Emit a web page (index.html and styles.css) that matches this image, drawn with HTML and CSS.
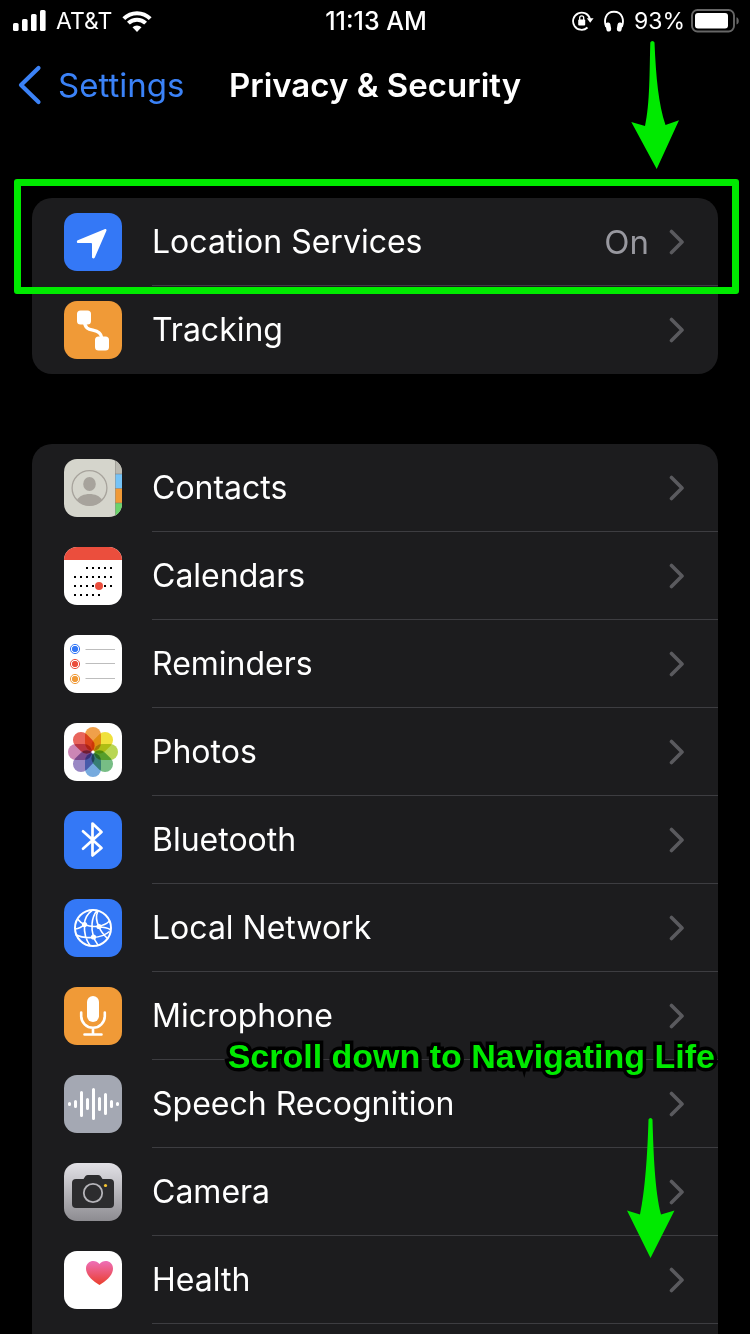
FILE: index.html
```html
<!DOCTYPE html>
<html lang="en">
<head>
<meta charset="utf-8">
<meta name="viewport" content="width=device-width, initial-scale=1">
<title>Privacy &amp; Security</title>
<link rel="stylesheet" href="styles.css">
</head>
<body>
<svg class="defs" width="0" height="0" aria-hidden="true">
  <defs>
    <symbol id="chevron" viewBox="0 0 16 26"><path d="M2.500 2.500 13 13 2.500 23.500" fill="none" stroke="currentColor" stroke-width="3.600" stroke-linecap="round" stroke-linejoin="round"/></symbol>
    <linearGradient id="camera-bg" x1="0" y1="0" x2="0" y2="1"><stop offset="0" stop-color="#e2e1e6"/><stop offset="1" stop-color="#8d8c91"/></linearGradient>
    <linearGradient id="heart-fill" x1="0" y1="0" x2="0" y2="1"><stop offset="0" stop-color="#ee6fb8"/><stop offset="1" stop-color="#ea3e2c"/></linearGradient>
    <clipPath id="tile"><rect width="58" height="58" rx="13"/></clipPath>
  </defs>
</svg>
<div class="screen">
  <header class="top">
    <div class="status">
      <div class="status-group">
        <svg width="33" height="22" viewBox="0 0 33 22" fill="#fff" role="img" aria-label="Signal"><rect x="0" y="13" width="5.600" height="8" rx="1.600"/><rect x="9" y="9" width="5.600" height="12" rx="1.600"/><rect x="18" y="4" width="5.600" height="17" rx="1.600"/><rect x="27" y="0" width="5.600" height="21" rx="1.600"/></svg>
        <span class="carrier">AT&amp;T</span>
        <svg width="30" height="22" viewBox="0 0 30 22" role="img" aria-label="Wi-Fi"><path d="M1.800 8.600a18.700 18.700 0 0 1 26.400 0M6.400 13.200a12.200 12.200 0 0 1 17.200 0" fill="none" stroke="#fff" stroke-width="4"/><path d="M15 22 10.500 17.200a6.500 6.500 0 0 1 9 0z" fill="#fff"/></svg>
      </div>
      <time class="clock">11:13 AM</time>
      <div class="status-group status-right">
        <svg width="22" height="22" viewBox="0 0 22 22" role="img" aria-label="Rotation lock"><path d="M15.500 17.500A8.600 8.600 0 1 1 18 9" fill="none" stroke="#fff" stroke-width="1.800"/><path d="M14.800 8.200h6.800l-3.400 4.600z" fill="#fff"/><rect x="6.200" y="9.500" width="7" height="6" rx="1" fill="#fff"/><path d="M7.700 10V7.800a2 2 0 0 1 4 0V10" fill="none" stroke="#fff" stroke-width="1.300"/></svg>
        <svg width="20" height="22" viewBox="0 0 20 22" role="img" aria-label="Headphones"><path d="M2.200 17C-.5 10 1.500 1.800 10 1.800S20.500 10 17.800 17" fill="none" stroke="#fff" stroke-width="1.900"/><rect x="2" y="12.500" width="4.800" height="9" rx="2.200" transform="rotate(-10 4.400 17)" fill="#fff"/><rect x="13.200" y="12.500" width="4.800" height="9" rx="2.200" transform="rotate(10 15.600 17)" fill="#fff"/></svg>
        <span class="battery">93%
          <svg width="48" height="24" viewBox="0 0 48 24" role="img" aria-label="Battery"><rect x="1" y="1" width="42" height="21.500" rx="5.500" fill="none" stroke="#666" stroke-width="1.900"/><rect x="4" y="4" width="33" height="15.500" rx="3" fill="#fff"/><path d="M45.500 8.200c3 1.200 3 6.200 0 7.400z" fill="#666"/></svg>
        </span>
      </div>
    </div>
    <nav class="navbar">
      <a class="back" href="#"><svg width="24" height="40" viewBox="0 0 24 40" aria-hidden="true"><path d="M20.500 3 3 20l17.500 17" fill="none" stroke="currentColor" stroke-width="4.200" stroke-linecap="round" stroke-linejoin="round"/></svg>Settings</a>
      <h1 class="title">Privacy &amp; Security</h1>
    </nav>
    <svg class="arrow arrow-top" width="50" height="130" viewBox="0 0 50 130" aria-hidden="true"><path d="M20.300 2.500Q20.800 1 22.300 1 24 1 24.500 2.500C26 38 28.500 64 35.500 85L49 80.300 26.700 129 1.300 82 15 86C20 64 19.500 30 20.300 2.500z" fill="#00ea00"/></svg>
  </header>

  <main class="content">
    <ul class="card">
      <li class="item">
        <a class="row" href="#">
          <svg class="icon" viewBox="0 0 58 58" aria-hidden="true"><rect width="58" height="58" rx="13" fill="#3478f6"/><path d="M40.500 16.200c1.500-.6 2.400.4 1.800 1.800L30.800 44.500c-.7 1.500-2.800 1.200-2.800-.5V31.200c0-.8-.3-1.200-1.200-1.200H14.300c-1.700 0-2-2-.5-2.700z" fill="#fff"/></svg>
          <span class="label">Location Services</span><span class="value">On</span>
          <svg class="chevron" aria-hidden="true"><use href="#chevron"/></svg>
        </a>
        <span class="highlight"></span>
      </li>
      <li class="item">
        <a class="row" href="#">
          <svg class="icon" viewBox="0 0 58 58" aria-hidden="true"><rect width="58" height="58" rx="13" fill="#f09a37"/><path d="M20.500 20C20.500 35 38 23 38 40" fill="none" stroke="#fff" stroke-width="3.200"/><rect x="13" y="9.500" width="14" height="14" rx="3.500" fill="#fff"/><rect x="31" y="35.500" width="14" height="14" rx="3.500" fill="#fff"/></svg>
          <span class="label">Tracking</span>
          <svg class="chevron" aria-hidden="true"><use href="#chevron"/></svg>
        </a>
      </li>
    </ul>

    <ul class="card card-long">
      <li class="item">
        <a class="row" href="#">
          <svg class="icon" viewBox="0 0 58 58" aria-hidden="true"><g clip-path="url(#tile)"><rect width="58" height="58" fill="#d5d5cc"/><path d="M51 0h7v15h-7z" fill="#bab9b1"/><path d="M51 15h7v14.500h-7z" fill="#75c3f7"/><path d="M51 29.500h7V44h-7z" fill="#f09a37"/><path d="M51 44h7v14h-7z" fill="#6bd36b"/><path d="M51.500 0v58" stroke="#8c8b85" stroke-opacity=".5"/><path d="M51 15h7M51 29.500h7M51 44h7" stroke="#777" stroke-opacity=".5"/></g><circle cx="25.500" cy="29" r="17.400" fill="none" stroke="#a7a39c" stroke-width="1.300"/><ellipse cx="25.500" cy="25" rx="6.300" ry="7" fill="#a7a39c"/><path d="M13 41c4-8 21-8 25 0-7 7.500-18 7.500-25 0z" fill="#a7a39c"/></svg>
          <span class="label">Contacts</span>
          <svg class="chevron" aria-hidden="true"><use href="#chevron"/></svg>
        </a>
      </li>
      <li class="item">
        <a class="row" href="#">
          <svg class="icon" viewBox="0 0 58 58" aria-hidden="true"><g clip-path="url(#tile)"><rect width="58" height="58" fill="#fff"/><rect width="58" height="13" fill="#eb4e3d"/></g><path d="M22 21h26M10 30h38M10 39h38M10 48h26" fill="none" stroke="#000" stroke-width="2" stroke-dasharray="2 4"/><circle cx="35" cy="39" r="4" fill="#eb4e3d"/></svg>
          <span class="label">Calendars</span>
          <svg class="chevron" aria-hidden="true"><use href="#chevron"/></svg>
        </a>
      </li>
      <li class="item">
        <a class="row" href="#">
          <svg class="icon" viewBox="0 0 58 58" aria-hidden="true"><rect width="58" height="58" rx="13" fill="#fff"/><path d="M21.500 14.500H51M21.500 28.500H51M21.500 43.500H51" stroke="#bdbdbd"/><g fill="#3478f6" stroke="#3478f6"><circle cx="11" cy="14" r="2.700"/><circle cx="11" cy="14" r="4.600" fill="none"/></g><g fill="#eb4e3d" stroke="#eb4e3d"><circle cx="11" cy="29" r="2.700"/><circle cx="11" cy="29" r="4.600" fill="none"/></g><g fill="#f09a37" stroke="#f09a37"><circle cx="11" cy="44" r="2.700"/><circle cx="11" cy="44" r="4.600" fill="none"/></g></svg>
          <span class="label">Reminders</span>
          <svg class="chevron" aria-hidden="true"><use href="#chevron"/></svg>
        </a>
      </li>
      <li class="item">
        <a class="row" href="#">
          <svg class="icon" viewBox="0 0 58 58" aria-hidden="true"><rect width="58" height="58" rx="13" fill="#fff"/><g class="petals"><rect x="21" y="4" width="16" height="24" rx="8" fill="#f0a04a"/><rect x="21" y="4" width="16" height="24" rx="8" fill="#f0e13c" transform="rotate(45 29 29)"/><rect x="21" y="4" width="16" height="24" rx="8" fill="#b9d653" transform="rotate(90 29 29)"/><rect x="21" y="4" width="16" height="24" rx="8" fill="#77bd85" transform="rotate(135 29 29)"/><rect x="21" y="4" width="16" height="24" rx="8" fill="#76aade" transform="rotate(180 29 29)"/><rect x="21" y="4" width="16" height="24" rx="8" fill="#9988c4" transform="rotate(225 29 29)"/><rect x="21" y="4" width="16" height="24" rx="8" fill="#cc86b5" transform="rotate(270 29 29)"/><rect x="21" y="4" width="16" height="24" rx="8" fill="#e8655c" transform="rotate(315 29 29)"/></g><circle cx="29" cy="29" r="1.600" fill="#fff"/></svg>
          <span class="label">Photos</span>
          <svg class="chevron" aria-hidden="true"><use href="#chevron"/></svg>
        </a>
      </li>
      <li class="item">
        <a class="row" href="#">
          <svg class="icon" viewBox="0 0 58 58" aria-hidden="true"><rect width="58" height="58" rx="13" fill="#3478f6"/><path d="M19 20.300 37.500 37 28.500 44.500V12.500L37.500 21 19 37.700" fill="none" stroke="#fff" stroke-width="2.700" stroke-linecap="round" stroke-linejoin="round"/></svg>
          <span class="label">Bluetooth</span>
          <svg class="chevron" aria-hidden="true"><use href="#chevron"/></svg>
        </a>
      </li>
      <li class="item">
        <a class="row" href="#">
          <svg class="icon" viewBox="0 0 58 58" aria-hidden="true"><rect width="58" height="58" rx="13" fill="#3478f6"/><g fill="none" stroke="#fff" stroke-width="1.600"><circle cx="29" cy="29" r="18" stroke-width="2"/><path d="M28.500 11C23 15 20.500 20 20.500 25.500 20 33 22 41 26 46.500M33 11.500C27 19 27 30 29.500 38c1 3 2.500 5 4.500 8M34 12c-2.500 5-1.500 11 1 16 2 5 5 8 8 11M13.500 20c2 2.500 4.500 4.500 7 5.500 8 3.500 19 2.500 25-3.500M11 30c4-.5 7-2 9.500-4.500M11.500 35.500c9 5 26 4 34-3M35 28c4 0 8 .5 12 3"/></g><g fill="#fff"><circle cx="20.500" cy="25.500" r="2.600"/><circle cx="35" cy="27.500" r="2.600"/><circle cx="29.500" cy="38" r="2.600"/></g></svg>
          <span class="label">Local Network</span>
          <svg class="chevron" aria-hidden="true"><use href="#chevron"/></svg>
        </a>
      </li>
      <li class="item">
        <a class="row" href="#">
          <svg class="icon" viewBox="0 0 58 58" aria-hidden="true"><rect width="58" height="58" rx="13" fill="#f09a37"/><rect x="23" y="9" width="12" height="26" rx="6" fill="#fff"/><path d="M17.200 25.500V29a11.800 11.800 0 0 0 23.600 0v-3.500M29 41v6M20.500 47.500h17" fill="none" stroke="#fff" stroke-width="2.600" stroke-linecap="round"/></svg>
          <span class="label">Microphone</span>
          <svg class="chevron" aria-hidden="true"><use href="#chevron"/></svg>
        </a>
        <p class="caption">Scroll down to Navigating Life</p>
      </li>
      <li class="item">
        <a class="row" href="#">
          <svg class="icon" viewBox="0 0 58 58" aria-hidden="true"><rect width="58" height="58" rx="13" fill="#a4a8b3"/><path d="M5.500 28.500v1M11.500 26.500v5M17.500 17.500v23M23.500 24.500v9M29.500 14.500v29M35.500 23.500v11M41.500 19.500v19M47.500 26.500v5M53.500 28.500v1" stroke="#fff" stroke-width="3" stroke-linecap="round"/></svg>
          <span class="label">Speech Recognition</span>
          <svg class="chevron" aria-hidden="true"><use href="#chevron"/></svg>
        </a>
        <svg class="arrow arrow-bottom" width="50" height="142" viewBox="0 0 50 142" aria-hidden="true"><path d="M22.500 2.500Q23 1 24.500 1 26 1 26.500 2.500C27.500 38 29 74 35 97.500L48.500 93.500 24.500 141 1 93.500 14 97.500C19 74 21.500 38 22.500 2.500z" fill="#00ea00"/></svg>
      </li>
      <li class="item">
        <a class="row" href="#">
          <svg class="icon" viewBox="0 0 58 58" aria-hidden="true"><rect width="58" height="58" rx="13" fill="url(#camera-bg)"/><path d="M12 16h7.500l2-3q1-1 2.500-1h10q1.500 0 2.500 1l2 3H46q4 0 4 4v21q0 4-4 4H12q-4 0-4-4V20q0-4 4-4z" fill="#2c2c2e"/><circle cx="29" cy="30" r="9.200" fill="none" stroke="#b5b4b9" stroke-width="1.800"/><circle cx="41.500" cy="22.500" r="1.600" fill="#f7c530"/></svg>
          <span class="label">Camera</span>
          <svg class="chevron" aria-hidden="true"><use href="#chevron"/></svg>
        </a>
      </li>
      <li class="item">
        <a class="row" href="#">
          <svg class="icon" viewBox="0 0 58 58" aria-hidden="true"><rect width="58" height="58" rx="13" fill="#fff"/><path d="M35.500 34C29 30 22 24.500 22 17.500c0-8 9.500-10 13.500-4.500 4-5.500 13.500-3.500 13.500 4.500C49 24.500 42 30 35.500 34z" fill="url(#heart-fill)"/></svg>
          <span class="label">Health</span>
          <svg class="chevron" aria-hidden="true"><use href="#chevron"/></svg>
        </a>
      </li>
    </ul>
  </main>
</div>
</body>
</html>
```
FILE: styles.css
```css
* {
  box-sizing: border-box;
}

body {
  margin: 0;
  background: #000;
  color: #fff;
  font-family: Inter, "Liberation Sans", sans-serif;
  font-size: 33px;
  line-height: 40px;
}

.defs {
  position: absolute;
}

.screen {
  display: flex;
  flex-direction: column;
  min-height: 100vh;
}

.top {
  position: relative;
}

.status {
  display: grid;
  grid-template-columns: 1fr auto 1fr;
  align-items: center;
  height: 41px;
  padding: 0 11px 0 13px;
  font-size: 24px;
  line-height: 28px;
}

.status-group {
  display: flex;
  align-items: center;
  gap: 10px;
}

.status-right {
  justify-content: flex-end;
}

.battery {
  display: flex;
  align-items: center;
  gap: 6px;
}

.carrier,
.battery {
  font-size: 23px;
}

.clock {
  font-size: 25px;
  font-weight: 500;
}

.navbar {
  display: grid;
  grid-template-columns: 1fr auto 1fr;
  align-items: center;
  height: 87px;
  padding: 0 18px;
}

.back {
  display: flex;
  align-items: center;
  gap: 16px;
  color: #3b82f7;
  text-decoration: none;
}

.title {
  margin: 0;
  font-size: 33px;
  font-weight: 600;
}

.content {
  display: flex;
  flex: 1;
  flex-direction: column;
  gap: 70px;
  padding: 70px 32px 0;
}

.card {
  margin: 0;
  padding: 0;
  list-style: none;
  border-radius: 20px;
  background: #1c1c1e;
}

.card-long {
  flex: 1;
  padding-bottom: 10px;
  border-radius: 20px 20px 0 0;
}

.item {
  position: relative;
}

.row {
  display: flex;
  align-items: center;
  height: 88px;
  padding: 0 33px 0 32px;
  color: inherit;
  text-decoration: none;
  background: linear-gradient(#3d3d41, #3d3d41) 120px 100% / 100% 1px no-repeat;
}

.card:not(.card-long) .item:last-child .row {
  background: none;
}

.icon {
  flex: none;
  width: 58px;
  height: 58px;
  margin-right: 30px;
}

.label {
  flex: 1;
  font-size: 32px;
}

.value {
  margin-right: 20px;
  color: #98989f;
}

.chevron {
  flex: none;
  width: 16px;
  height: 26px;
  color: #5a5a5e;
}

.petals {
  isolation: isolate;
}

.petals rect {
  mix-blend-mode: multiply;
}

.highlight {
  position: absolute;
  z-index: 1;
  inset: -19px -21px -8px -18px;
  border: 7px solid #00ea00;
  border-radius: 3px;
  pointer-events: none;
}

.arrow {
  position: absolute;
  z-index: 1;
  pointer-events: none;
}

.arrow-top {
  top: 40px;
  right: 70px;
}

.arrow-bottom {
  top: 57px;
  right: 42px;
}

.caption {
  position: absolute;
  z-index: 1;
  right: 3px;
  bottom: -16px;
  margin: 0;
  color: #00ea00;
  font-family: "Liberation Sans", Arial, sans-serif;
  font-size: 34px;
  font-weight: 700;
  white-space: nowrap;
  -webkit-text-stroke: 7px #000;
  stroke-linejoin: round;
  paint-order: stroke fill;
  pointer-events: none;
}
```
